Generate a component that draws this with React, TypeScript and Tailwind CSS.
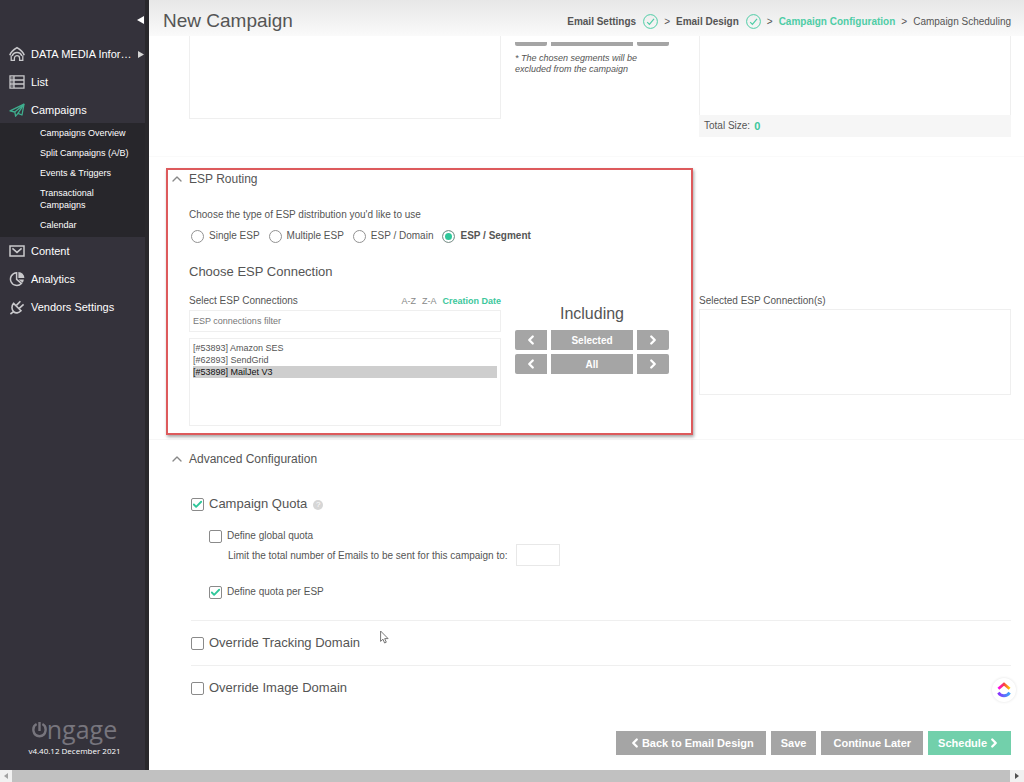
import React, { useState } from "react";
import clsx from "clsx";
import { LuCheck, LuChevronLeft, LuChevronRight, LuChevronUp } from "react-icons/lu";

const CONNECTIONS = [
  { id: "53893", name: "Amazon SES" },
  { id: "62893", name: "SendGrid" },
  { id: "53898", name: "MailJet V3" },
];

const ESP_TYPES = ["Single ESP", "Multiple ESP", "ESP / Domain", "ESP / Segment"];

const CAMPAIGN_LINKS = [
  "Campaigns Overview",
  "Split Campaigns (A/B)",
  "Events & Triggers",
  "Transactional Campaigns",
  "Calendar",
];

const iconProps = {
  width: 16,
  height: 16,
  viewBox: "0 0 16 16",
  fill: "none",
  stroke: "currentColor",
  strokeWidth: 1.3,
};

function HomeIcon() {
  return (
    <svg {...iconProps}>
      <path d="M.8 9.2C2 5.6 4.6 3.6 8 1.6c3.4 2 6 4 7.2 7.6" strokeWidth="1.6" />
      <path d="M2.2 9.4v5h3.2v-2.2a2.6 2.6 0 0 1 5.2 0v2.2h3.2v-5" />
      <path d="M3.2 10a5 5 0 0 1 9.6 0" strokeWidth="1.5" />
    </svg>
  );
}

function ListIcon() {
  return (
    <svg {...iconProps}>
      <path d="M1 1.8h14v12.4H1zM5 1.8v12.4M1 6h14M1 10h14" />
      <path d="M2 4h3M2 8h3M2 12h3" strokeWidth="0.8" />
    </svg>
  );
}

function PlaneIcon() {
  return (
    <svg {...iconProps}>
      <path d="M1 8.8 15 2.2l-2 10.8-4-1.6-2.4 2.8-.8-4.2z" strokeLinejoin="round" />
      <path d="M15 2.2 5.8 10M15 2.2 9 11.4" />
    </svg>
  );
}

function MailIcon() {
  return (
    <svg {...iconProps} strokeWidth={1.5}>
      <path d="M1 3h14v10H1z" />
      <path d="m3.4 5.4 4.6 4 4.6-4" />
    </svg>
  );
}

function PieIcon() {
  return (
    <svg {...iconProps} strokeWidth={1.5}>
      <path d="M7.6 1.8a6.3 6.3 0 1 0 4.8 10.6L7.6 8.4z" />
      <path d="M9.4 1v6h6a6 6 0 0 0-6-6z" fill="currentColor" stroke="none" />
      <path d="M9.6 8.6h5.2a6 6 0 0 1-1.2 3.2z" fill="currentColor" stroke="none" />
    </svg>
  );
}

function PlugIcon() {
  return (
    <svg {...iconProps} strokeWidth={1.6}>
      <path d="M4.6 4.4 12 11.8c-2.2 2.4-5.4 2.8-7.4.8s-2.4-5.6 0-8.2z" />
      <path d="M4.6 12.6 1.4 15M7.4 6.4l4-4.2M10.2 9.4l4.4-4" />
    </svg>
  );
}

function NavItem({ icon, label, active = false, arrow = false }) {
  return (
    <a href="#" className="flex h-7 items-center gap-1.5 pr-px pl-[9px] text-[11px] text-white">
      <span className={clsx("shrink-0", active ? "text-[#3fae8e]" : "text-[#c9c9cc]")}>{icon}</span>
      <span className="min-w-0 flex-1 whitespace-nowrap">{label}</span>
      {arrow && (
        <svg className="shrink-0" width="6" height="7" viewBox="0 0 6 7" fill="#d5d5d5"><path d="M0 0l6 3.5L0 7z" /></svg>
      )}
    </a>
  );
}

function Sidebar() {
  return (
    <aside className="flex w-[149px] shrink-0 flex-col border-r-4 border-[#29282c] bg-[#34323b]">
      <div className="flex h-10 items-center justify-end pr-px">
        <button aria-label="Collapse menu">
          <svg width="7" height="8" viewBox="0 0 7 8" fill="#fff"><path d="M7 0v8L0 4z" /></svg>
        </button>
      </div>
      <nav>
        <NavItem icon={<HomeIcon />} label="DATA MEDIA Infor…" arrow />
        <NavItem icon={<ListIcon />} label="List" />
        <NavItem icon={<PlaneIcon />} label="Campaigns" active />
        <div className="-mt-px flex flex-col bg-[#27262b] pb-0.5 text-[9px] leading-3 text-white">
          {CAMPAIGN_LINKS.map((link) => (
            <a key={link} href="#" className="py-1 pr-2 pl-10">
              {link}
            </a>
          ))}
        </div>
        <NavItem icon={<MailIcon />} label="Content" />
        <NavItem icon={<PieIcon />} label="Analytics" />
        <NavItem icon={<PlugIcon />} label="Vendors Settings" />
      </nav>
      <div className="mt-auto flex flex-col items-center pb-[13px] pl-1">
        <div className="flex items-center text-[#77757d]">
          <svg width="15" height="18" viewBox="0 0 15 18" fill="none" stroke="currentColor" strokeWidth="2.4">
            <path d="M4.6 4C-.4 6.6.4 16.2 7.5 16.2S15.400 6.600 10.400 4M7.500 2v9" />
          </svg>
          <span className="font-['Open_Sans',sans-serif] text-[25px] leading-8 font-medium">ngage</span>
        </div>
        <span className="font-['Open_Sans',sans-serif] text-[8px] leading-3 text-white">v4.40.12 December 2021</span>
      </div>
    </aside>
  );
}

function StepDone() {
  return (
    <svg width="15" height="15" viewBox="0 0 15 15" fill="none" stroke="#4fcda6">
      <circle cx="7.5" cy="7.5" r="6.9" />
      <path d="M4.2 8.2l2.2 2.2 4.6-5.6" strokeWidth="1.2" />
    </svg>
  );
}

function Header() {
  return (
    <header className="flex h-9 items-center justify-between bg-linear-to-b from-[#e7e7e7] to-[#fafafa] pt-1.5 pr-[13px] pl-3.5 text-[#555]">
      <h1 className="text-[19px] leading-6">New Campaign</h1>
      <ol className="flex items-center gap-1.5 text-[10px]">
        <li className="flex items-center gap-[7px] font-bold">Email Settings <StepDone /></li>
        <li>&gt;</li>
        <li className="flex items-center gap-[7px] font-bold">Email Design <StepDone /></li>
        <li>&gt;</li>
        <li className="font-bold text-[#4fcda6]">Campaign Configuration</li>
        <li>&gt;</li>
        <li>Campaign Scheduling</li>
      </ol>
    </header>
  );
}

function SectionTitle({ children }) {
  return (
    <h2 className="text-xs leading-5">
      <button className="flex items-center gap-1 pl-5">
        <LuChevronUp className="size-4 text-[#888]" />
        {children}
      </button>
    </h2>
  );
}

function Check({ label, checked, onChange, large = false }) {
  return (
    <label className={clsx("flex w-fit items-center gap-[5px]", large ? "text-[13px] leading-5" : "text-[10px] leading-4")}>
      <span className="relative size-[13px]">
        <input
          type="checkbox"
          checked={checked}
          onChange={(e) => onChange(e.target.checked)}
          className="block size-[13px] appearance-none rounded-xs border border-[#8a8a8a] bg-white"
        />
        {checked && <LuCheck className="pointer-events-none absolute top-px left-px size-[11px] stroke-[#2fc79a] stroke-4" />}
      </span>
      {label}
    </label>
  );
}

function MoveRow({ label }) {
  const side = "flex h-5 w-8 items-center justify-center bg-[#a5a5a5] text-white";
  return (
    <div className="flex gap-1">
      <button aria-label={`Remove ${label}`} className={clsx(side, "rounded-l-xs")}>
        <LuChevronLeft className="size-3.5 stroke-4" />
      </button>
      <button className="h-5 flex-1 bg-[#a5a5a5] text-[10px] font-bold text-white">{label}</button>
      <button aria-label={`Add ${label}`} className={clsx(side, "rounded-r-xs")}>
        <LuChevronRight className="size-3.5 stroke-4" />
      </button>
    </div>
  );
}

function SegmentsRow() {
  return (
    <section className="grid h-[121px] grid-cols-[minmax(0,1fr)_170px_minmax(0,1fr)] gap-x-3.5 border-b border-[#fafafa] pr-[13px] pl-10">
      <div className="h-[83px] border border-t-0 border-[#efefef]" />
      <div className="mr-4 pt-1.5">
        <div className="flex gap-1">
          <span className="h-1 w-8 rounded-b-xs bg-[#a5a5a5]" />
          <span className="h-1 flex-1 bg-[#a5a5a5]" />
          <span className="h-1 w-8 rounded-b-xs bg-[#a5a5a5]" />
        </div>
        <p className="mt-[7px] w-32 text-[9px] leading-[11px] italic">* The chosen segments will be excluded from the campaign</p>
      </div>
      <div>
        <div className="h-[79px] border-x border-[#efefef]" />
        <p className="flex h-[22px] items-center gap-1 bg-[#f6f6f6] px-[5px] text-[10px] leading-5">
          Total Size: <b className="text-[11px] text-[#3cc79c]">0</b>
        </p>
      </div>
    </section>
  );
}

function EspRouting() {
  const [type, setType] = useState("ESP / Segment");
  const [picked, setPicked] = useState(["53898"]);

  return (
    <section className="relative border-b border-[#f7f7f7] pt-3 pb-[13px]">
      <SectionTitle>ESP Routing</SectionTitle>
      <div className="pr-[13px] pl-10">
        <fieldset className="mt-[18px] text-[10px] leading-4">
          <legend>Choose the type of ESP distribution you'd like to use</legend>
          <div className="mt-[5px] flex gap-[9px] pl-0.5">
            {ESP_TYPES.map((t) => (
              <label key={t} className={clsx("flex items-center gap-[5px]", type === t && "font-bold")}>
                <input
                  type="radio"
                  name="esp-type"
                  checked={type === t}
                  onChange={() => setType(t)}
                  className="size-[13px] appearance-none rounded-full border border-[#929292] bg-white checked:bg-[#2fc79a] checked:shadow-[inset_0_0_0_2px_#fff]"
                />
                {t}
              </label>
            ))}
          </div>
        </fieldset>

        <h3 className="mt-[18px] text-[13px] leading-5">Choose ESP Connection</h3>

        <div className="mt-[11px] grid grid-cols-[minmax(0,1fr)_170px_minmax(0,1fr)] gap-x-3.5">
          <div>
            <div className="flex items-center justify-between leading-4">
              <label htmlFor="esp-connections" className="text-[10px]">Select ESP Connections</label>
              <span className="flex gap-1.5 text-[9px]">
                <button className="text-[#888]">A-Z</button>
                <button className="text-[#888]">Z-A</button>
                <button className="font-bold text-[#3cc79c]">Creation Date</button>
              </span>
            </div>
            <input
              aria-label="ESP connections filter"
              placeholder="ESP connections filter"
              className="mt-px block h-[22px] w-full border border-[#efefef] px-[3px] text-[9px] placeholder:text-[#777]"
            />
            <select
              id="esp-connections"
              multiple
              value={picked}
              onChange={(e) => setPicked(Array.from(e.target.selectedOptions, (o) => o.value))}
              className="mt-1.5 block h-[88px] w-full border border-[#efefef] p-[3px] text-[9px] leading-3"
            >
              {CONNECTIONS.map((c) => (
                <option key={c.id} value={c.id} className="h-3 pt-px">{`[#${c.id}] ${c.name}`}</option>
              ))}
            </select>
          </div>

          <div className="mr-4 flex flex-col gap-1 pt-[11px]">
            <h4 className="mb-0.5 text-center text-base leading-5">Including</h4>
            <MoveRow label="Selected" />
            <MoveRow label="All" />
          </div>

          <div>
            <label htmlFor="selected-connections" className="block text-[10px] leading-4">Selected ESP Connection(s)</label>
            <select id="selected-connections" multiple className="block h-[86px] w-full border border-[#efefef]" />
          </div>
        </div>
      </div>

      <div className="pointer-events-none absolute top-[11px] bottom-1 left-[17px] w-[527px] border-2 border-[#dd5a5c] shadow-[1px_2px_3px_rgba(0,0,0,0.35)]" />
    </section>
  );
}

function AdvancedConfiguration() {
  const [quota, setQuota] = useState(true);
  const [globalQuota, setGlobalQuota] = useState(false);
  const [perEsp, setPerEsp] = useState(true);
  const [tracking, setTracking] = useState(false);
  const [image, setImage] = useState(false);

  return (
    <section className="pt-[9px]">
      <SectionTitle>Advanced Configuration</SectionTitle>
      <div className="pt-[25px] pr-[13px] pl-[42px]">
        <div className="flex items-center gap-1.5">
          <Check large label="Campaign Quota" checked={quota} onChange={setQuota} />
          <button aria-label="Help" className="mt-0.5 flex size-2.5 items-center justify-center rounded-full bg-[#d6d6d6] text-[8px] leading-none text-white">
            ?
          </button>
        </div>
        <div className="mt-[14px] pl-[18px]">
          <Check label="Define global quota" checked={globalQuota} onChange={setGlobalQuota} />
          <div className="flex items-center gap-2 pl-[19px] text-[10px]">
            <label htmlFor="quota-limit">Limit the total number of Emails to be sent for this campaign to:</label>
            <input id="quota-limit" className="h-[22px] w-11 border border-[#e8e8e8] px-1" />
          </div>
          <div className="mt-[18px]">
            <Check label="Define quota per ESP" checked={perEsp} onChange={setPerEsp} />
          </div>
        </div>
        <div className="mt-5 border-t border-[#efefef] py-3">
          <Check large label="Override Tracking Domain" checked={tracking} onChange={setTracking} />
        </div>
        <div className="border-t border-[#efefef] pt-3">
          <Check large label="Override Image Domain" checked={image} onChange={setImage} />
        </div>
      </div>
    </section>
  );
}

function Actions() {
  const base = "flex h-6 items-center text-[11px] font-bold text-white";
  return (
    <div className="mt-auto flex justify-end gap-[5px] pr-[13px] pb-[15px]">
      <button className={clsx(base, "bg-[#a5a5a5] px-3")}>
        <LuChevronLeft className="size-3.5 stroke-4" />
        Back to Email Design
      </button>
      <button className={clsx(base, "bg-[#a5a5a5] px-2.5")}>Save</button>
      <button className={clsx(base, "bg-[#a5a5a5] px-3")}>Continue Later</button>
      <button className={clsx(base, "bg-[#72d0ab] px-2.5")}>
        Schedule
        <LuChevronRight className="size-3.5 stroke-4" />
      </button>
    </div>
  );
}

function ScrollBar() {
  return (
    <div className="flex h-3 bg-[#f1f1f1]">
      <button aria-label="Scroll left" className="flex w-3 items-center justify-center">
        <svg width="4" height="6" viewBox="0 0 4 6" fill="#a3a3a3"><path d="M4 0v6L0 3z" /></svg>
      </button>
      <div className="flex-1 bg-[#c1c1c1]" />
      <button aria-label="Scroll right" className="flex w-3.5 items-center justify-center">
        <svg width="4" height="6" viewBox="0 0 4 6" fill="#505050"><path d="M0 0v6l4-3z" /></svg>
      </button>
    </div>
  );
}

export default function App() {
  return (
    <div className="relative flex min-h-screen flex-col bg-white font-['Liberation_Sans',Arial,sans-serif] text-[#555]">
      <div className="flex flex-1">
        <Sidebar />
        <main className="flex min-w-0 flex-1 flex-col">
          <Header />
          <SegmentsRow />
          <EspRouting />
          <AdvancedConfiguration />
          <Actions />
        </main>
      </div>
      <ScrollBar />

      {/* Floating ClickUp button */}
      <button aria-label="ClickUp" className="absolute right-2 bottom-20 flex size-6 items-center justify-center rounded-full bg-white shadow-[0_0_3px_rgba(0,0,0,0.12)]">
        <svg width="14" height="16" viewBox="0 0 14 16" fill="none" strokeWidth="2.8">
          <defs>
            <linearGradient id="cu-top" x1="0" x2="1">
              <stop offset="0" stopColor="#ff02f0" />
              <stop offset="0.5" stopColor="#f8413f" />
              <stop offset="1" stopColor="#ffc800" />
            </linearGradient>
            <linearGradient id="cu-bottom" x1="0" x2="1">
              <stop offset="0" stopColor="#8930fd" />
              <stop offset="1" stopColor="#3aa5f8" />
            </linearGradient>
          </defs>
          <path d="M1.4 6.8 7 2l5.6 4.8" stroke="url(#cu-top)" />
          <path d="M1.4 10.6c2.8 4.2 8.4 4.2 11.2 0" stroke="url(#cu-bottom)" />
        </svg>
      </button>

      {/* Mouse pointer */}
      <svg className="pointer-events-none absolute top-[630px] left-[380px]" width="9" height="14" viewBox="0 0 9 14" fill="#fff" stroke="#777">
        <path d="M.6 1v10.4l2.4-2.2 1.6 3.8 1.7-.8-1.6-3.6h3.4z" />
      </svg>
    </div>
  );
}
